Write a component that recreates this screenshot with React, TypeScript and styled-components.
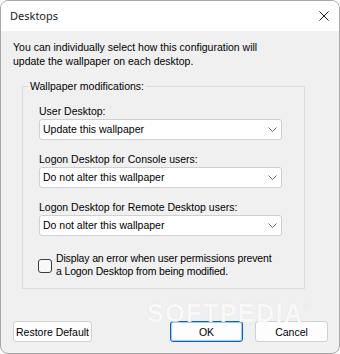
import React from "react";
import styled, { createGlobalStyle } from "styled-components";

const Global = createGlobalStyle`
  html, body { margin: 0; padding: 0; background: #ffffff; }
  body { font-family: "Liberation Sans", Arial, sans-serif; }
  #root { width: 340px; height: 354px; }
`;

const Window = styled.div`
  position: relative;
  box-sizing: border-box;
  width: 340px;
  height: 354px;
  border: 1px solid #a8a8a8;
  border-radius: 8px;
  overflow: hidden;
  background: #f0f0f0;
  display: flex;
  flex-direction: column;
`;

const TitleBar = styled.div`
  flex: none;
  height: 30px;
  background: #ffffff;
  display: flex;
  align-items: center;
  justify-content: space-between;
  padding: 0 10px 0 9px;
  font-family: "Noto Sans", "Segoe UI", sans-serif;
  font-size: 11px;
  color: #1a1a1a;
`;

const Title = styled.span`
  line-height: 16px;
`;

const Body = styled.div`
  flex: 1;
  display: flex;
  flex-direction: column;
  padding: 0 11px 11px 11px;
  font-size: 10.5px;
  color: #000;
`;

const Description = styled.p`
  margin: 9px 0 0 1px;
  line-height: 14px;
`;

const Group = styled.fieldset`
  box-sizing: border-box;
  width: 283px;
  margin: 12px 0 0 10px;
  padding: 0;
  border: 1px solid #dcdcdc;
  min-width: 0;
`;

const GroupTitle = styled.legend`
  margin-left: 5px;
  padding: 0 2px;
  line-height: 13px;
`;

const GroupContent = styled.div`
  display: flex;
  flex-direction: column;
  padding: 12px 0 10px 16px;
`;

const Field = styled.div<{ $first?: boolean }>`
  display: flex;
  flex-direction: column;
  margin-top: ${(p) => (p.$first ? "0" : "13px")};
`;

const FieldLabel = styled.label`
  line-height: 13px;
  margin-bottom: 1px;
`;

const Combo = styled.div`
  box-sizing: border-box;
  width: 243px;
  height: 21px;
  background: #ffffff;
  border: 1px solid #d0d0d0;
  border-radius: 3px;
  display: flex;
  align-items: center;
  justify-content: space-between;
  padding: 0 4px 0 3px;
`;

const ComboValue = styled.span`
  line-height: 13px;
`;

const CheckRow = styled.div`
  display: flex;
  align-items: center;
  margin-top: 16px;
  margin-left: -1px;
`;

const CheckBox = styled.span`
  box-sizing: border-box;
  flex: none;
  width: 14px;
  height: 14px;
  border: 1px solid #3c3c3c;
  border-radius: 3px;
  background: #f8f8f8;
  margin-right: 4px;
  margin-top: 1px;
`;

const CheckText = styled.span`
  line-height: 13px;
  letter-spacing: -0.15px;
`;

const ButtonRow = styled.div`
  margin-top: auto;
  display: flex;
  align-items: center;
  padding-left: 1px;
`;

const Button = styled.button<{ $w: number; $default?: boolean }>`
  box-sizing: border-box;
  width: ${(p) => p.$w}px;
  height: 21px;
  padding: 0;
  font-family: "Liberation Sans", Arial, sans-serif;
  font-size: 10.5px;
  color: #000;
  background: #fdfdfd;
  border: 1px solid ${(p) => (p.$default ? "#0067c0" : "#d0d0d0")};
  border-radius: 3px;
  box-shadow: ${(p) => (p.$default ? "inset 0 0 0 1px rgba(0,103,192,0.35)" : "none")};
`;

const Spacer = styled.div`
  flex: 1;
`;

const Gap = styled.div`
  width: 12px;
  flex: none;
`;

const Watermark = styled.div`
  position: absolute;
  left: 146px;
  top: 298px;
  font-family: "Liberation Sans", Arial, sans-serif;
  font-weight: 700;
  font-size: 25px;
  letter-spacing: 1.5px;
  color: rgba(255, 255, 255, 0.85);
  text-shadow: 0 0 1px rgba(0, 0, 0, 0.12);
  pointer-events: none;
  & sup {
    font-size: 9px;
    font-weight: 400;
    vertical-align: 12px;
    letter-spacing: 0;
  }
`;

const CloseIcon = () => (
  <svg width="10" height="10" viewBox="0 0 10 10" fill="none">
    <path d="M0.5 0.5L9.5 9.5M9.5 0.5L0.5 9.5" stroke="#1c1c1c" strokeWidth="1" />
  </svg>
);

const Chevron = () => (
  <svg width="9" height="5" viewBox="0 0 9 5" fill="none">
    <path d="M0.5 0.5L4.5 4.5L8.5 0.5" stroke="#707070" strokeWidth="1" />
  </svg>
);

const fields = [
  { label: "User Desktop:", value: "Update this wallpaper" },
  { label: "Logon Desktop for Console users:", value: "Do not alter this wallpaper" },
  { label: "Logon Desktop for Remote Desktop users:", value: "Do not alter this wallpaper" },
];

export default function App() {
  return (
    <>
      <Global />
      <Window>
        <TitleBar>
          <Title>Desktops</Title>
          <CloseIcon />
        </TitleBar>
        <Body>
          <Description>
            You can individually select how this configuration will
            <br />
            update the wallpaper on each desktop.
          </Description>
          <Group>
            <GroupTitle>Wallpaper modifications:</GroupTitle>
            <GroupContent>
              {fields.map((f, i) => (
                <Field key={f.label} $first={i === 0}>
                  <FieldLabel>{f.label}</FieldLabel>
                  <Combo role="combobox">
                    <ComboValue>{f.value}</ComboValue>
                    <Chevron />
                  </Combo>
                </Field>
              ))}
              <CheckRow>
                <CheckBox role="checkbox" aria-checked="false" />
                <CheckText>
                  Display an error when user permissions prevent
                  <br />
                  a Logon Desktop from being modified.
                </CheckText>
              </CheckRow>
            </GroupContent>
          </Group>
          <ButtonRow>
            <Button $w={79}>Restore Default</Button>
            <Spacer />
            <Button $w={73} $default>
              OK
            </Button>
            <Gap />
            <Button $w={73}>Cancel</Button>
          </ButtonRow>
        </Body>
        <Watermark>
          SOFTPEDIA<sup>®</sup>
        </Watermark>
      </Window>
    </>
  );
}
